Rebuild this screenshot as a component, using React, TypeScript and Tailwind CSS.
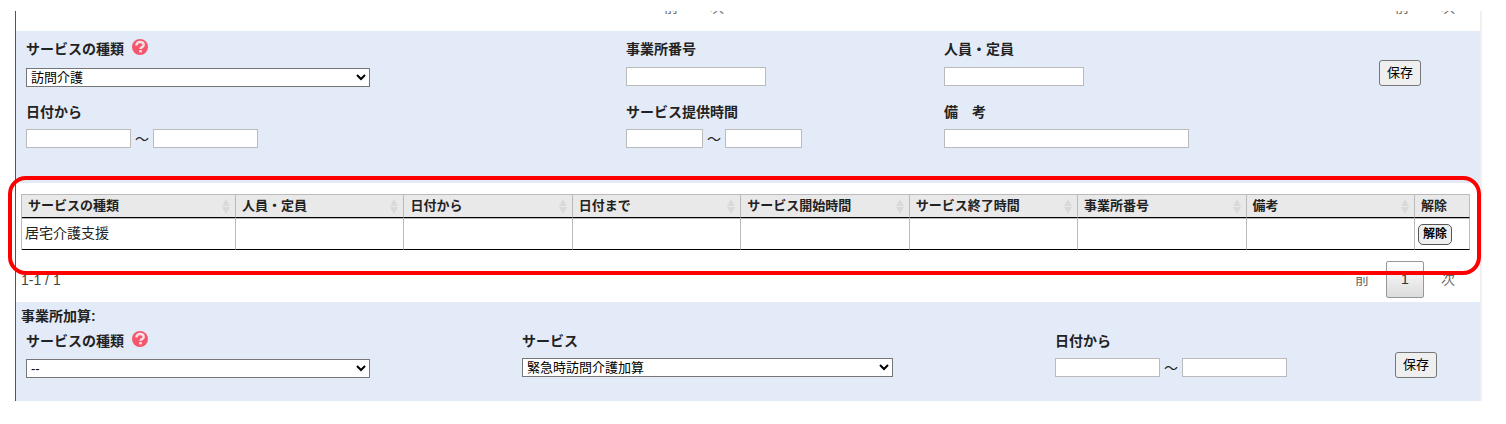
import React from 'react';

const HEADERS = [
  'サービスの種類',
  '人員・定員',
  '日付から',
  '日付まで',
  'サービス開始時間',
  'サービス終了時間',
  '事業所番号',
  '備考',
];

const labelClass = 'flex items-center h-5 text-[14px] leading-5 font-bold';
const inputClass = 'h-[19px] bg-white border border-[#bbbbbb] px-1 text-[13px] text-black';
const selectClass = 'h-[19px] bg-white border border-[#767676] rounded-none text-[13px] text-black';
const cellClass = 'p-0 border-t border-r border-[#bbbbbb] border-b border-b-black';

function HelpIcon() {
  return (
    <svg viewBox="0 0 16 16" className="w-4 h-4 ml-2 -mt-1 shrink-0" aria-hidden="true">
      <circle cx="8" cy="8" r="8" fill="#f4566c" />
      <path
        d="M4.4 6.4C4.4 4 5.9 3 8 3s3.7 1 3.7 2.9c0 2.3-3.2 2.1-3.2 4"
        fill="none"
        stroke="#fbdfe6"
        strokeWidth="2.4"
      />
      <rect x="7.2" y="11" width="2.6" height="2.4" fill="#fbdfe6" />
    </svg>
  );
}

function SortIcon() {
  return (
    <svg viewBox="0 0 8 15" className="w-2 h-[15px] shrink-0" fill="#d9d9d9" aria-hidden="true">
      <path d="M4 0l4 7H0z" />
      <path d="M4 15l4-7H0z" />
    </svg>
  );
}

function Range({ id, width }: { id: string; width: string }) {
  return (
    <div className="flex items-center gap-1 h-[19px] text-[14px] leading-none">
      <input id={id} type="text" className={`${inputClass} ${width}`} />
      <span>～</span>
      <input type="text" aria-label="まで" className={`${inputClass} ${width}`} />
    </div>
  );
}

function SaveButton() {
  return (
    <button
      type="button"
      className="block h-[26px] px-[7px] pb-[2px] bg-[#efefef] border border-[#767676] rounded-[3px] text-[13px] leading-none text-black"
    >
      保存
    </button>
  );
}

export default function App() {
  return (
    <div className="pt-[11px] pl-[15px] pr-6 bg-white text-[#222222] font-['Liberation_Sans','Noto_Sans_CJK_JP',sans-serif]">
      <div className="border-l border-l-[#555555] border-r-2 border-r-[#f0f0f0]">
        {/* 前の一覧のページ送り */}
        <div className="h-5 overflow-hidden flex items-end pb-[14px] text-[14px] leading-5 text-[#666666]">
          <div className="w-1/2 flex justify-end gap-8 pr-6">
            <span>前</span>
            <span>次</span>
          </div>
          <div className="w-1/2 flex justify-end gap-8 pr-[25px]">
            <span>前</span>
            <span>次</span>
          </div>
        </div>

        {/* サービス入力 */}
        <form className="bg-[#e4ebf8] pl-[10px] pt-2 pb-[35px] grid grid-cols-[600fr_318fr_435fr_101fr]">
          <div>
            <label htmlFor="kind" className={labelClass}>
              サービスの種類
              <HelpIcon />
            </label>
            <select id="kind" className={`${selectClass} block w-[344px] mt-[9px]`}>
              <option>訪問介護</option>
            </select>
            <label htmlFor="from" className={`${labelClass} mt-[15px] mb-[7px]`}>日付から</label>
            <Range id="from" width="w-[105px]" />
          </div>
          <div>
            <label htmlFor="office" className={labelClass}>事業所番号</label>
            <input id="office" type="text" className={`${inputClass} block w-[140px] mt-2`} />
            <label htmlFor="time" className={`${labelClass} mt-4 mb-[7px]`}>サービス提供時間</label>
            <Range id="time" width="w-[77px]" />
          </div>
          <div>
            <label htmlFor="staff" className={labelClass}>人員・定員</label>
            <input id="staff" type="text" className={`${inputClass} block w-[140px] mt-2`} />
            <label htmlFor="note" className={`${labelClass} mt-4 mb-[7px]`}>備　考</label>
            <input id="note" type="text" className={`${inputClass} block w-[245px]`} />
          </div>
          <div className="pt-[21px]">
            <SaveButton />
          </div>
        </form>

        {/* 登録済みサービス一覧 */}
        <div className="pt-[11px] pb-1 pl-[5px] pr-[10px]">
          <div className="relative">
            <table className="w-full table-fixed border-separate border-spacing-0 border-l border-[#bbbbbb]">
              <colgroup>
                <col className="w-[214px]" />
                <col span={7} />
                <col className="w-[55px]" />
              </colgroup>
              <thead>
                <tr className="bg-[#e9e9e9] text-[13px] leading-[22px] text-left">
                  {HEADERS.map((header) => (
                    <th key={header} className={cellClass}>
                      <div className="flex items-center justify-between h-[22px] pl-[6px] pr-[5px]">
                        {header}
                        <SortIcon />
                      </div>
                    </th>
                  ))}
                  <th className={`${cellClass} pl-[6px]`}>解除</th>
                </tr>
              </thead>
              <tbody>
                <tr className="text-[14px] leading-5">
                  <td className={`${cellClass} h-8 pl-[3px] pb-[2px]`}>居宅介護支援</td>
                  {HEADERS.slice(1).map((header) => (
                    <td key={header} className={cellClass}></td>
                  ))}
                  <td className={`${cellClass} pl-[3px]`}>
                    <button
                      type="button"
                      className="block h-[21px] px-1 bg-[#efefef] border border-[#555555] rounded-[5px] text-[12px] leading-none font-bold text-black"
                    >
                      解除
                    </button>
                  </td>
                </tr>
              </tbody>
            </table>
            {/* 強調枠 */}
            <div className="absolute -top-[18px] -bottom-[25px] -left-[13px] -right-[11px] z-10 border-4 border-[#ff0000] rounded-[18px] pointer-events-none"></div>
          </div>

          <div className="flex items-center justify-between pt-[11px] text-[14px] text-[#444444]">
            <span className="pt-[2px]">1-1 / 1</span>
            <div className="flex items-center pr-[15px] text-[#666666]">
              <button type="button">前</button>
              <button
                type="button"
                className="w-[38px] h-[37px] mx-[17px] border border-[#979797] rounded-[2px] bg-linear-to-b from-white to-[#dcdcdc] text-[#333333]"
              >
                1
              </button>
              <button type="button">次</button>
            </div>
          </div>
        </div>

        {/* 事業所加算 */}
        <form className="bg-[#e4ebf8] pt-1 pb-[23px]">
          <h2 className="pl-[5px] text-[14px] leading-5 font-bold">事業所加算:</h2>
          <div className="pl-[10px] pt-[5px] grid grid-cols-[496fr_533fr_340fr_85fr]">
            <div>
              <label htmlFor="addKind" className={labelClass}>
                サービスの種類
                <HelpIcon />
              </label>
              <select id="addKind" className={`${selectClass} block w-[344px] mt-2`}>
                <option>--</option>
              </select>
            </div>
            <div>
              <label htmlFor="addService" className={`${labelClass} mb-[7px]`}>サービス</label>
              <select id="addService" className={`${selectClass} block w-[371px]`}>
                <option>緊急時訪問介護加算</option>
              </select>
            </div>
            <div>
              <label htmlFor="addFrom" className={`${labelClass} mb-[7px]`}>日付から</label>
              <Range id="addFrom" width="w-[105px]" />
            </div>
            <div className="pt-[21px]">
              <SaveButton />
            </div>
          </div>
        </form>
      </div>
    </div>
  );
}
